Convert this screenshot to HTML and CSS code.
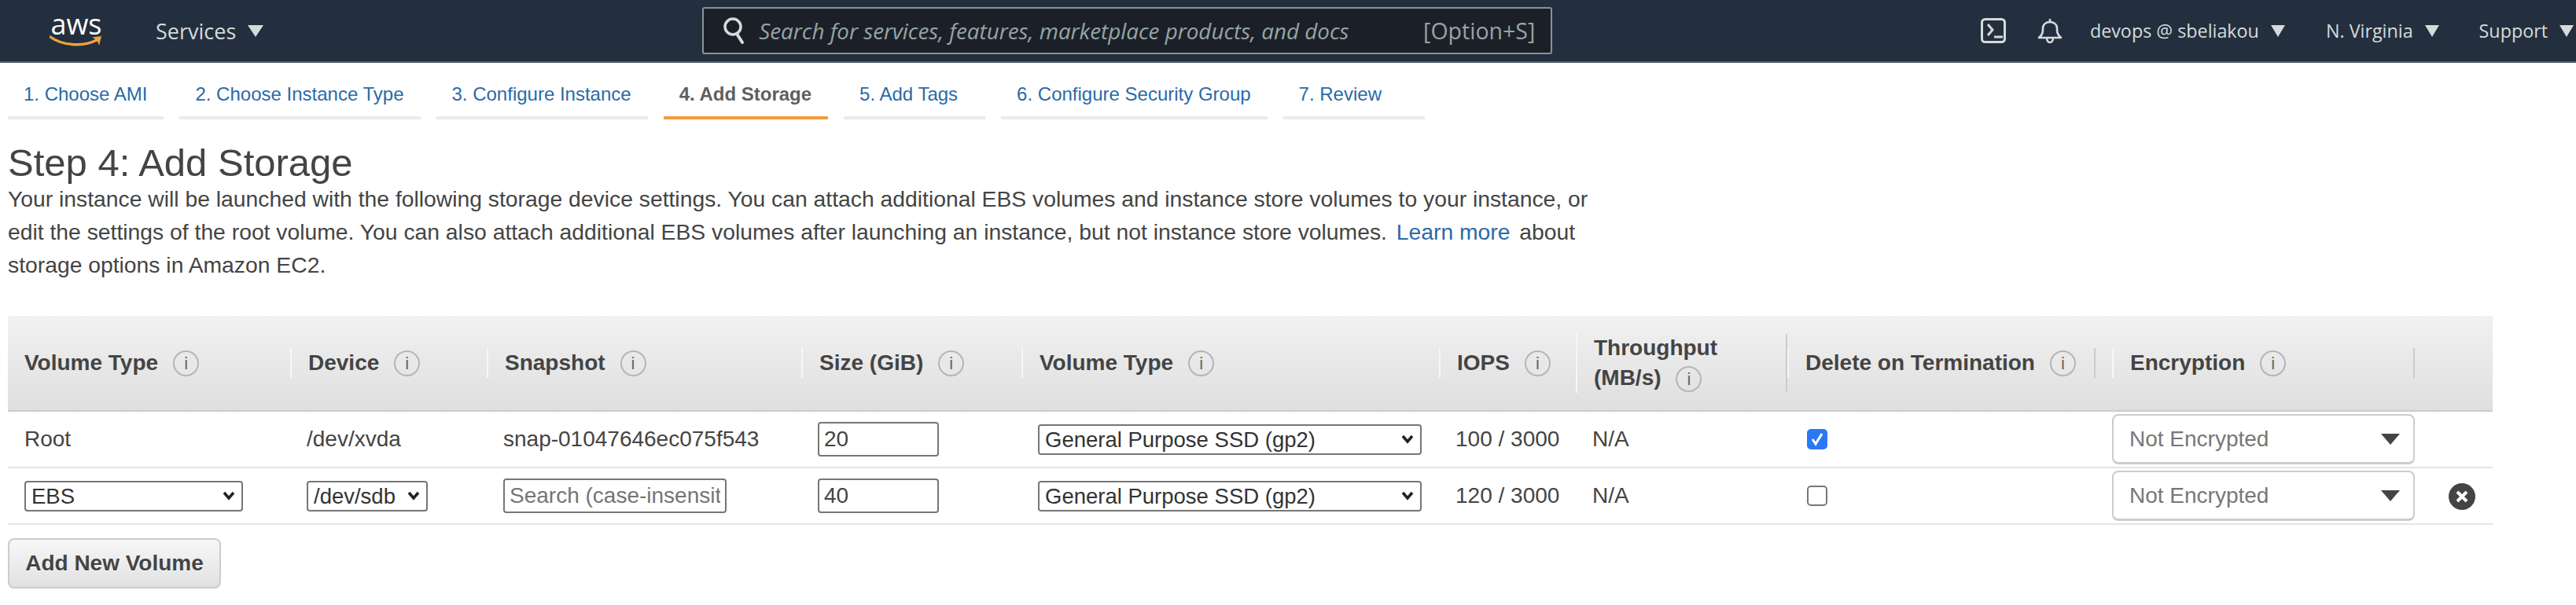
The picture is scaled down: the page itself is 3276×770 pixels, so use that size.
FILE: index.html
```html
<!DOCTYPE html>
<html lang="en">
<head>
    <meta charset="UTF-8">
    <title>Launch instance wizard | EC2 Management Console</title>
    <link rel="stylesheet" href="styles.css">
</head>
<body>
    <!-- Console top bar -->
    <header class="topbar">
        <a class="logo" href="#">
            <span class="logo-word">aws</span>
            <svg class="logo-smile" viewBox="0 0 68 16" width="68" height="16">
                <path d="M1 2C16 13 42 15 60 6" fill="none" stroke="#f0a23c" stroke-width="3.4" stroke-linecap="round"/>
                <path d="M54 2.500L66 1L63 13C62 9 60 5 54 2.500Z" fill="#f0a23c"/>
            </svg>
        </a>
        <span class="nav-item services">Services <i class="caret"></i></span>
        <div class="search">
            <svg class="search-icon" viewBox="0 0 28 36" width="28" height="36">
                <circle cx="13" cy="13" r="10" fill="none" stroke="#d5dbdb" stroke-width="3.500"/>
                <path d="M18 22L25 33" stroke="#d5dbdb" stroke-width="4" stroke-linecap="round"/>
            </svg>
            <span class="search-text">Search for services, features, marketplace products, and docs</span>
            <span class="search-key">[Option+S]</span>
        </div>
        <div class="top-right">
            <svg class="terminal" viewBox="0 0 32 32" width="32" height="32">
                <rect x="1.500" y="1.500" width="29" height="29" rx="4" fill="none" stroke="#d5dbdb" stroke-width="3"/>
                <path d="M9 8L15 15L9 22" fill="none" stroke="#d5dbdb" stroke-width="3"/>
                <path d="M17 24H28" stroke="#d5dbdb" stroke-width="3"/>
            </svg>
            <svg class="bell" viewBox="0 0 32 32" width="32" height="32">
                <path d="M2 25C7 21 7 17 7 13C7 8 11 5 16 5C21 5 25 8 25 13C25 17 25 21 30 25Z" fill="none" stroke="#d5dbdb" stroke-width="2.600" stroke-linejoin="round"/>
                <path d="M16 1V5" stroke="#d5dbdb" stroke-width="2.600"/>
                <path d="M12 25C12 33 20 33 20 25" fill="none" stroke="#d5dbdb" stroke-width="2.600"/>
            </svg>
            <span class="nav-item small account">devops @ sbeliakou <i class="caret"></i></span>
            <span class="nav-item small region">N. Virginia <i class="caret"></i></span>
            <span class="nav-item small support">Support <i class="caret"></i></span>
        </div>
    </header>

    <!-- Passos do wizard -->
    <nav class="steps">
        <a class="step" href="#">1. Choose AMI</a>
        <a class="step" href="#">2. Choose Instance Type</a>
        <a class="step" href="#">3. Configure Instance</a>
        <a class="step active" href="#">4. Add Storage</a>
        <a class="step" href="#">5. Add Tags</a>
        <a class="step" href="#">6. Configure Security Group</a>
        <a class="step" href="#">7. Review</a>
    </nav>

    <main class="content">
        <h1>Step 4: Add Storage</h1>
        <p class="intro">Your instance will be launched with the following storage device settings. You can attach additional EBS volumes and instance store volumes to your instance, or edit the settings of the root volume. You can also attach additional EBS volumes after launching an instance, but not instance store volumes. <a href="#">Learn more</a> about storage options in Amazon EC2.</p>

        <table class="volumes">
            <colgroup>
                <col class="c-type"><col class="c-device"><col class="c-snap"><col class="c-size"><col class="c-vol">
                <col class="c-iops"><col class="c-thr"><col class="c-del"><col class="c-enc"><col class="c-rm">
            </colgroup>
            <thead>
                <tr>
                    <th><div class="th-in first">Volume Type <i class="info">i</i></div></th>
                    <th><div class="th-in">Device <i class="info">i</i></div></th>
                    <th><div class="th-in">Snapshot <i class="info">i</i></div></th>
                    <th><div class="th-in">Size (GiB) <i class="info">i</i></div></th>
                    <th><div class="th-in">Volume Type <i class="info">i</i></div></th>
                    <th><div class="th-in">IOPS <i class="info">i</i></div></th>
                    <th><div class="th-in tall"><span>Throughput<br>(MB/s) <i class="info">i</i></span></div></th>
                    <th><div class="th-in del">Delete on Termination <i class="info">i</i></div></th>
                    <th><div class="th-in end">Encryption <i class="info">i</i></div></th>
                    <th></th>
                </tr>
            </thead>
            <tbody>
                <tr>
                    <td>Root</td>
                    <td>/dev/xvda</td>
                    <td>snap-01047646ec075f543</td>
                    <td><input class="field size" type="text" value="20"></td>
                    <td><select class="pick pick-vol"><option>General Purpose SSD (gp2)</option></select></td>
                    <td>100 / 3000</td>
                    <td>N/A</td>
                    <td><input class="check" type="checkbox" checked></td>
                    <td class="no-pad"><div class="encrypt">Not Encrypted <i class="enc-caret"></i></div></td>
                    <td></td>
                </tr>
                <tr>
                    <td><select class="pick pick-type"><option>EBS</option></select></td>
                    <td><select class="pick pick-dev"><option>/dev/sdb</option></select></td>
                    <td><input class="field snap" type="text" placeholder="Search (case-insensitive)"></td>
                    <td><input class="field size" type="text" value="40"></td>
                    <td><select class="pick pick-vol"><option>General Purpose SSD (gp2)</option></select></td>
                    <td>120 / 3000</td>
                    <td>N/A</td>
                    <td><input class="check" type="checkbox"></td>
                    <td class="no-pad"><div class="encrypt">Not Encrypted <i class="enc-caret"></i></div></td>
                    <td class="no-pad">
                        <svg class="remove" viewBox="0 0 34 34" width="34" height="34">
                            <circle cx="17" cy="17" r="17" fill="#444"/>
                            <path d="M11 11L23 23M23 11L11 23" stroke="#fff" stroke-width="4"/>
                        </svg>
                    </td>
                </tr>
            </tbody>
        </table>

        <button class="add-btn" type="button">Add New Volume</button>
    </main>
</body>
</html>
```

FILE: styles.css
```css
* {
    box-sizing: border-box;
}
body {
    margin: 0;
    font-family: "Liberation Sans", Arial, sans-serif;
    font-size: 28px;
    color: #444;
    background-color: #fff;
    overflow: hidden;
}

/* top bar */
.topbar {
    display: flex;
    align-items: center;
    height: 80px;
    background-color: #232f3e;
    border-bottom: 2px solid #545b64;
    font-family: "Open Sans", sans-serif;
    color: #d5dbdb;
    white-space: nowrap;
    overflow: hidden;
}
.logo {
    display: flex;
    flex-direction: column;
    align-items: center;
    width: 68px;
    margin-left: 63px;
    text-decoration: none;
}
.logo-word {
    font-size: 36px;
    line-height: 26px;
    color: #fff;
}
.logo-smile {
    display: block;
    margin-top: 1px;
}
.nav-item {
    display: flex;
    align-items: center;
    gap: 15px;
    font-size: 27px;
}
.nav-item.small {
    font-size: 23.300px;
}
.services {
    margin-left: 67px;
}
.caret {
    width: 0;
    height: 0;
    border-left: 10px solid transparent;
    border-right: 10px solid transparent;
    border-top: 15px solid #d5dbdb;
}
.small .caret {
    border-left-width: 9px;
    border-right-width: 9px;
}
.search {
    display: flex;
    align-items: center;
    width: 1081px;
    height: 60px;
    margin-left: 558px;
    padding: 0 20px 0 24px;
    background-color: #1b2028;
    border: 2px solid #879596;
    border-radius: 3px;
    color: #95a5a6;
}
.search-icon {
    flex: none;
}
.search-text {
    margin-left: 18px;
    font-size: 27.800px;
    font-style: italic;
}
.search-key {
    margin-left: auto;
    font-size: 28.500px;
}
.top-right {
    display: flex;
    align-items: center;
    margin-left: auto;
    padding-right: 3px;
}
.bell {
    margin-left: 40px;
}
.account {
    margin-left: 35px;
}
.region {
    margin-left: 52px;
}
.support {
    margin-left: 51px;
}

/* wizard steps */
.steps {
    display: flex;
    gap: 20px;
    height: 72px;
    padding-left: 10px;
}
.step {
    display: flex;
    align-items: center;
    min-width: 180px;
    padding: 12px 21px 0 20px;
    border-bottom: 4px solid #ebebeb;
    font-size: 24px;
    color: #2a6aa8;
    text-decoration: none;
}
.step.active {
    border-bottom-color: #f49b3c;
    color: #5f5f5f;
    font-weight: bold;
}

/* conteudo */
.content {
    padding: 0 10px;
}
h1 {
    margin: 30px 0 0;
    font-size: 49px;
    font-weight: normal;
    line-height: 50px;
}
.intro {
    width: 2040px;
    margin: 0;
    font-size: 28.300px;
    line-height: 42px;
}
.intro a {
    margin: 0 4px;
    color: #2a6aa8;
    text-decoration: none;
}

/* tabela de volumes */
.volumes {
    width: 3160px;
    margin-top: 44px;
    border-collapse: separate;
    border-spacing: 0;
    table-layout: fixed;
}
.c-type { width: 359px; }
.c-device { width: 250px; }
.c-snap { width: 400px; }
.c-size { width: 280px; }
.c-vol { width: 531px; }
.c-iops { width: 174px; }
.c-thr { width: 269px; }
.c-del { width: 413px; }
.c-enc { width: 385px; }
.c-rm { width: 99px; }

.volumes th {
    height: 122px;
    padding: 0;
    background: linear-gradient(#f1f1f1, #dfdfdf);
    border-bottom: 2px solid #ccc;
    text-align: left;
    color: #444;
}
.th-in {
    display: flex;
    align-items: center;
    gap: 19px;
    height: 38px;
    padding-left: 21px;
    border-left: 2px solid #f7f7f7;
    white-space: nowrap;
}
.th-in.first {
    border-left: 0;
}
.th-in.tall {
    height: 75px;
    border-right: 2px solid #ccc;
    line-height: 38px;
}
.th-in.del {
    margin-right: 21px;
    border-right: 2px solid #ccc;
}
.th-in.end {
    border-right: 2px solid #ccc;
}
.info {
    display: inline-block;
    width: 33px;
    height: 33px;
    flex: none;
    border: 2px solid #b5b5b5;
    border-radius: 50%;
    font-family: "Liberation Sans", sans-serif;
    font-size: 22px;
    font-style: normal;
    font-weight: normal;
    line-height: 29px;
    text-align: center;
    vertical-align: middle;
    color: #666;
}
.th-in.tall .info {
    margin-left: 11px;
}
.volumes td {
    height: 72px;
    padding: 0 0 0 21px;
    border-bottom: 2px solid #e4e4e4;
    white-space: nowrap;
}
.volumes td.no-pad {
    padding-left: 0;
}

/* campos */
.field {
    display: block;
    height: 44px;
    padding: 0 6px;
    border: 2px solid #767676;
    border-radius: 4px;
    font-family: inherit;
    font-size: 28px;
    color: #444;
    background-color: #fff;
}
.field.size {
    width: 154px;
}
.field.snap {
    width: 284px;
}
.field::placeholder {
    color: #757575;
    opacity: 1;
}
.pick {
    display: block;
    height: 39px;
    padding: 0 7px;
    border: 2px solid #767676;
    border-radius: 4px;
    font-family: inherit;
    font-size: 27.500px;
    color: #333;
    appearance: none;
    background-color: #fff;
    background-image: url("data:image/svg+xml,%3Csvg xmlns='http://www.w3.org/2000/svg' width='16' height='12'%3E%3Cpath d='M2 2L8 9L14 2' fill='none' stroke='%23222' stroke-width='3.500'/%3E%3C/svg%3E");
    background-repeat: no-repeat;
    background-position: right 8px center;
}
.pick-type {
    width: 278px;
}
.pick-dev {
    width: 154px;
}
.pick-vol {
    width: 488px;
}
.check {
    display: block;
    width: 26px;
    height: 26px;
    margin: 0 0 0 4px;
    border: 2px solid #767676;
    border-radius: 5px;
    appearance: none;
    background-color: #fff;
}
.check:checked {
    border-color: #2b78f5;
    background-color: #2b78f5;
    background-image: url("data:image/svg+xml,%3Csvg xmlns='http://www.w3.org/2000/svg' width='22' height='22'%3E%3Cpath d='M5 11L9 17L17 4' fill='none' stroke='%23fff' stroke-width='3'/%3E%3C/svg%3E");
}
.encrypt {
    display: flex;
    align-items: center;
    justify-content: space-between;
    width: 385px;
    height: 64px;
    padding: 0 17px 0 20px;
    border: 2px solid #ccc;
    border-bottom-width: 3px;
    border-radius: 8px;
    color: #777;
}
.enc-caret {
    width: 0;
    height: 0;
    border-left: 12px solid transparent;
    border-right: 12px solid transparent;
    border-top: 14px solid #444;
}
.remove {
    display: block;
    margin: 2px 0 0 43px;
}
.add-btn {
    display: block;
    width: 271px;
    height: 64px;
    margin-top: 17px;
    border: 2px solid #ccc;
    border-radius: 8px;
    background: linear-gradient(#f7f7f7, #e1e1e1);
    font-family: inherit;
    font-size: 28px;
    font-weight: bold;
    color: #444;
    text-shadow: 0 1px 0 #fff;
}
```
